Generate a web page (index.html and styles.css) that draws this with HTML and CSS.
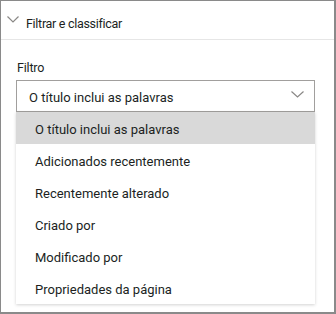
FILE: index.html
```html
<!DOCTYPE HTML>
<html lang="pt-BR">
  <head>
    <meta charset="UTF-8">
    <meta name="viewport" content="width=device-width, initial-scale=1">
    <title>Filtrar e classificar</title>
    <link rel="stylesheet" href="styles.css">
  </head>
  <body>
    <div class="panel">
      <!-- Cabeçalho da secção -->
      <div class="panel-header">
        <svg class="chevron-small" width="12" height="7" viewBox="0 0 12 7">
          <path d="M0.5 0.5 L6 6 L11.5 0.5" fill="none" stroke="#8a8886" stroke-width="1.2"/>
        </svg>
        <span class="panel-title">Filtrar e classificar</span>
      </div>
      <div class="panel-body">
        <label class="field-label">Filtro</label>
        <div class="dropdown">
          <span class="dropdown-value">O título inclui as palavras</span>
          <svg class="chevron" width="13" height="7" viewBox="0 0 13 7">
            <path d="M0.5 0.5 L6.5 6 L12.5 0.5" fill="none" stroke="#8a8886" stroke-width="1.2"/>
          </svg>
        </div>
        <ul class="dropdown-list">
          <li class="dropdown-item is-selected">O título inclui as palavras</li>
          <li class="dropdown-item">Adicionados recentemente</li>
          <li class="dropdown-item">Recentemente alterado</li>
          <li class="dropdown-item">Criado por</li>
          <li class="dropdown-item">Modificado por</li>
          <li class="dropdown-item">Propriedades da página</li>
        </ul>
      </div>
    </div>
  </body>
</html>
```

FILE: styles.css
```css
/* Base */
html,
body {
  margin: 0;
  padding: 0;
}

body {
  font-family: Roboto, "Liberation Sans", sans-serif;
  color: #201f1e;
  background: #ffffff;
}

/* Painel */
.panel {
  box-sizing: border-box;
  width: 336px;
  height: 314px;
  border: 1px solid #8a8a8a;
  border-right-width: 2px;
  border-bottom-width: 2px;
}

.panel-header {
  display: flex;
  align-items: center;
  height: 38px;
  padding-left: 6px;
  border-bottom: 1px solid #e6e6e6;
}

.chevron-small {
  display: block;
  margin-top: -2px;
}

.panel-title {
  margin-left: 7px;
  margin-top: 6px;
  font-size: 12.5px;
  letter-spacing: -0.3px;
}

.panel-body {
  padding: 20px 19px 0 15px;
}

.field-label {
  display: block;
  height: 20px;
  margin-left: 1px;
  font-size: 12.5px;
  letter-spacing: -0.2px;
}

/* Dropdown */
.dropdown {
  display: flex;
  align-items: center;
  justify-content: space-between;
  height: 30px;
  padding: 0 10px 0 12px;
  border: 1px solid #a19f9d;
}

.dropdown-value {
  padding-top: 2px;
  font-size: 13px;
}

.chevron {
  display: block;
  margin-top: -4px;
}

.dropdown-list {
  list-style: none;
  margin: 0;
  padding: 0;
  background: #fff;
  box-shadow: 0 1px 3px rgba(0, 0, 0, 0.18);
}

.dropdown-item {
  height: 32px;
  line-height: 35px;
  padding-left: 19px;
  font-size: 13px;
}

.dropdown-item.is-selected {
  background: #d9d9d9;
}
```
